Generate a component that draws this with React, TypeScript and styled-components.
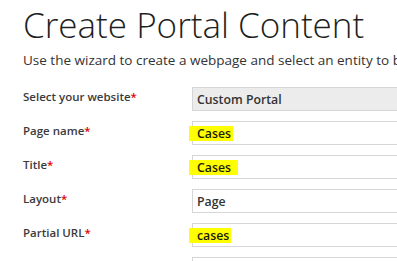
import styled, { createGlobalStyle } from "styled-components";

const GlobalStyle = createGlobalStyle`
  body {
    margin: 0;
    overflow: hidden;
    background: #ffffff;
    font-family: "Open Sans", "Noto Sans", sans-serif;
  }
`;

const Page = styled.div`
  padding: 0 0 0 23px;
  width: 600px;
`;

const Heading = styled.h1`
  margin: 0;
  padding-top: 4px;
  font-size: 35px;
  font-weight: 300;
  line-height: 42px;
  color: #1f1f1f;
`;

const Intro = styled.p`
  margin: 4px 0 0;
  font-size: 13.5px;
  line-height: 20px;
  color: #333333;
  white-space: nowrap;
`;

const Form = styled.div`
  display: grid;
  grid-template-columns: 169px 320px;
  row-gap: 10px;
  margin-top: 17px;
`;

const Label = styled.label`
  font-size: 11.5px;
  font-weight: 600;
  color: #3b3b3b;
  line-height: 16px;
  padding-top: 2px;
`;

const Required = styled.span`
  color: #e00000;
`;

const Field = styled.div<{ $readOnly?: boolean }>`
  box-sizing: border-box;
  height: 24px;
  border: 1px solid #d6d6d6;
  background: ${(p) => (p.$readOnly ? "#ececec" : "#ffffff")};
  display: flex;
  align-items: center;
  padding-left: 4px;
  font-size: 12.3px;
  font-weight: 600;
  color: #333333;
`;

const Marked = styled.span<{ $extra: number }>`
  display: inline-block;
  margin-left: -8px;
  padding: 0 ${(p) => p.$extra}px 0 8px;
  background: #ffff00;
  line-height: 15px;
  color: #1a1a00;
`;

const rows = [
  { label: "Select your website", value: "Custom Portal", readOnly: true },
  { label: "Page name", value: "Cases", mark: 2 },
  { label: "Title", value: "Cases", mark: 7 },
  { label: "Layout", value: "Page" },
  { label: "Partial URL", value: "cases", mark: 2 },
  { label: "", value: "" },
];

export default function App() {
  return (
    <Page>
      <GlobalStyle />
      <Heading>Create Portal Content</Heading>
      <Intro>
        Use the wizard to create a webpage and select an entity to be displayed
        on it.
      </Intro>
      <Form>
        {rows.map((row, i) => (
          <>
            <Label key={"l" + i}>
              {row.label}
              {row.label && <Required>*</Required>}
            </Label>
            <Field key={"f" + i} $readOnly={row.readOnly}>
              {row.mark !== undefined ? (
                <Marked $extra={row.mark}>{row.value}</Marked>
              ) : (
                row.value
              )}
            </Field>
          </>
        ))}
      </Form>
    </Page>
  );
}
